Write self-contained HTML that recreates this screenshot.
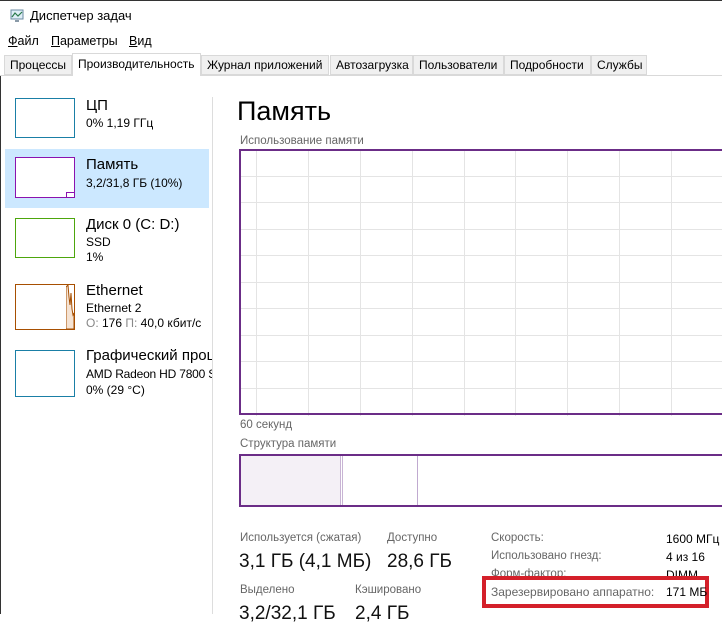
<!DOCTYPE html>
<html><head><meta charset="utf-8"><style>
*{margin:0;padding:0;box-sizing:border-box}
body{width:722px;height:614px;overflow:hidden;background:#fff;font-family:"Liberation Sans","DejaVu Sans",sans-serif;color:#000;position:relative}
.a{position:absolute;white-space:nowrap}
.tab{position:absolute;top:55px;height:20px;background:#f0f0f0;border:1px solid #d9d9d9;font-size:12px;line-height:18px;padding-left:5px}
.th{position:absolute;left:15px;width:60px;background:#fff;border:1px solid}
.t1{font-size:15px}
.t2{font-size:12px}
.lbl{font-size:11.5px;color:#666}
.big{font-size:19px;color:#111}
</style></head><body>
<div class="a" style="left:0;top:0;width:722px;height:1px;background:#333"></div>
<div class="a" style="left:0;top:75px;width:1px;height:539px;background:#333"></div>
<svg class="a" style="left:9px;top:8px" width="16" height="16" viewBox="0 0 16 16"><rect x="2" y="2" width="12" height="9" fill="#dfeef7" stroke="#6a8aa0"/><path d="M3 9 L6 5 L9 8 L13 4" fill="none" stroke="#2a7a4a" stroke-width="1.2"/><rect x="6" y="12" width="4" height="2" fill="#8a9aa8"/></svg>
<div class="a" style="left:30px;top:8px;font-size:13px">Диспетчер задач</div>
<div class="a" style="left:8px;top:34px;font-size:12.5px"><u>Ф</u>айл</div>
<div class="a" style="left:51px;top:34px;font-size:12.5px"><u>П</u>араметры</div>
<div class="a" style="left:129px;top:34px;font-size:12.5px"><u>В</u>ид</div>
<div class="a" style="left:0;top:75px;width:722px;height:1px;background:#d9d9d9"></div>
<div class="tab" style="left:4px;width:68px">Процессы</div>
<div class="tab" style="left:72px;top:53px;height:23px;width:129px;background:#fff;border-bottom:none;line-height:20px">Производительность</div>
<div class="tab" style="left:201px;width:128px">Журнал приложений</div>
<div class="tab" style="left:330px;width:83px">Автозагрузка</div>
<div class="tab" style="left:413px;width:91px">Пользователи</div>
<div class="tab" style="left:504px;width:87px">Подробности</div>
<div class="tab" style="left:591px;width:56px">Службы</div>

<div class="a" style="left:212px;top:97px;width:1px;height:517px;background:#ddd"></div>
<div class="a" style="left:5px;top:149px;width:204px;height:59px;background:#cce8ff"></div>

<div class="th" style="top:98px;height:40px;border-color:#1a7fa6"></div>
<div class="a t1" style="left:86px;top:97px">ЦП</div>
<div class="a t2" style="left:86px;top:116px">0% 1,19 ГГц</div>

<div class="th" style="top:157px;height:41px;border-color:#8b12ae"></div>
<div class="a" style="left:66px;top:192px;width:9px;height:5px;border:1px solid #8b12ae;border-right:none;border-bottom:none"></div>
<div class="a t1" style="left:86px;top:156px">Память</div>
<div class="a t2" style="left:86px;top:176px">3,2/31,8 ГБ (10%)</div>

<div class="th" style="top:218px;height:40px;border-color:#4da60c"></div>
<div class="a t1" style="left:86px;top:216px">Диск 0 (C: D:)</div>
<div class="a t2" style="left:86px;top:235px">SSD</div>
<div class="a t2" style="left:86px;top:250px">1%</div>

<div class="th" style="top:284px;height:46px;border-color:#a74f01"></div>
<svg class="a" style="left:66px;top:285px" width="9" height="44"><path d="M0 44 L0 2 L2 0 L3 12 L4 20 L5 8 L6 24 L7 30 L8 28 L8 44Z" fill="#f5e3d3" stroke="#a74f01"/></svg>
<div class="a t1" style="left:86px;top:282px">Ethernet</div>
<div class="a t2" style="left:86px;top:301px">Ethernet 2</div>
<div class="a t2" style="left:86px;top:316px"><span style="color:#888">О:</span> 176 <span style="color:#888">П:</span> 40,0 кбит/с</div>

<div class="th" style="top:350px;height:47px;border-color:#1a7fa6"></div>
<div class="a" style="left:86px;top:347px;width:126px;overflow:hidden">
<div class="t1">Графический процессор</div>
<div class="t2" style="margin-top:3px;letter-spacing:-0.2px">AMD Radeon HD 7800 Series</div>
<div class="t2" style="margin-top:2px">0% (29 °C)</div></div>

<div class="a" style="left:237px;top:96px;font-size:27px">Память</div>
<div class="a lbl" style="left:240px;top:135px">Использование памяти</div>
<svg class="a" style="left:239px;top:149px" width="483" height="267">
<g stroke="#e4e4e4" stroke-width="1">
<path d="M17.5 0V267M69.5 0V267M121.5 0V267M173.5 0V267M225.5 0V267M276.5 0V267M328.5 0V267M380.5 0V267M432.5 0V267"/>
<path d="M0 27.5H483M0 53.5H483M0 80.5H483M0 106.5H483M0 133.5H483M0 159.5H483M0 186.5H483M0 212.5H483M0 239.5H483"/>
</g>
<path d="M483 1H1V265H483" fill="none" stroke="#6b2d87" stroke-width="2"/>
</svg>
<div class="a lbl" style="left:240px;top:419px">60 секунд</div>
<div class="a lbl" style="left:240px;top:438px">Структура памяти</div>
<svg class="a" style="left:239px;top:454px" width="483" height="53">
<rect x="1" y="1" width="100" height="51" fill="#f4f0f6"/>
<path d="M101.5 1V52M103.5 1V52" stroke="#c8b4d4" stroke-width="1"/>
<path d="M178.5 1V52" stroke="#c0aad0"/>
<path d="M483 1H1V52H483" fill="none" stroke="#6b2d87" stroke-width="2"/>
</svg>

<div class="a lbl" style="left:240px;top:532px">Используется (сжатая)</div>
<div class="a lbl" style="left:387px;top:532px">Доступно</div>
<div class="a big" style="left:239px;top:551px">3,1 ГБ (4,1 МБ)</div>
<div class="a big" style="left:387px;top:551px">28,6 ГБ</div>
<div class="a lbl" style="left:240px;top:584px">Выделено</div>
<div class="a lbl" style="left:355px;top:584px">Кэшировано</div>
<div class="a big" style="left:239px;top:603px">3,2/32,1 ГБ</div>
<div class="a big" style="left:355px;top:603px">2,4 ГБ</div>

<div class="a lbl" style="left:491px;top:532px">Скорость:</div>
<div class="a t2" style="left:666px;top:532px">1600 МГц</div>
<div class="a lbl" style="left:491px;top:550px">Использовано гнезд:</div>
<div class="a t2" style="left:666px;top:550px">4 из 16</div>
<div class="a lbl" style="left:491px;top:568px">Форм-фактор:</div>
<div class="a t2" style="left:666px;top:568px">DIMM</div>
<div class="a" style="left:482px;top:576px;width:227px;height:32px;border:4px solid #d4202a;background:#fff"></div>
<div class="a lbl" style="left:491px;top:585px;font-size:12px">Зарезервировано аппаратно:</div>
<div class="a t2" style="left:666px;top:585px">171 МБ</div>
</body></html>
